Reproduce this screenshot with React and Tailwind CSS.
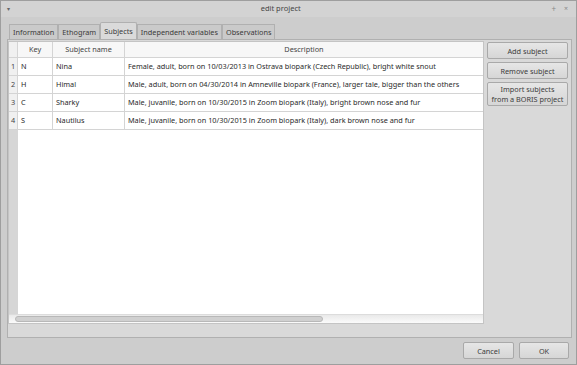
import React from 'react';

const rows = [
  ['1', 'N', 'Nina', 'Female, adult, born on 10/03/2013 in Ostrava biopark (Czech Republic), bright white snout'],
  ['2', 'H', 'Himal', 'Male, adult, born on 04/30/2014 in Amneville biopark (France), larger tale, bigger than the others'],
  ['3', 'C', 'Sharky', 'Male, juvanile, born on 10/30/2015 in Zoom biopark (Italy), bright brown nose and fur'],
  ['4', 'S', 'Nautilus', 'Male, juvanile, born on 10/30/2015 in Zoom biopark (Italy), dark brown nose and fur'],
];

const tabs = ['Information', 'Ethogram', 'Subjects', 'Independent variables', 'Observations'];

function Btn({ children, className = '' }) {
  return (
    <button className={`border border-[#a9a9a9] rounded-[2px] bg-gradient-to-b from-[#e6e6e6] to-[#d6d6d6] text-[#3c3c3c] leading-[10px] ${className}`}>
      {children}
    </button>
  );
}

export default function App() {
  return (
    <div className="w-[577px] h-[365px] bg-[#cdcdcd] border border-[#9e9e9e] flex flex-col text-[7.3px] text-[#2e2e2e] overflow-hidden" style={{ fontFamily: '"Noto Sans", "Open Sans", sans-serif' }}>
      {/* title bar */}
      <div className="h-[16px] flex items-center px-[6px] relative bg-[#d3d3d3]">
        <span className="text-[6px] text-[#666]">▾</span>
        <div className="flex-1 text-center text-[7.5px] text-[#444]">edit project</div>
        <span className="text-[#888] text-[8px] mr-[8px]">+</span>
        <span className="text-[#888] text-[7px] mr-[2px]">×</span>
      </div>

      {/* tabs */}
      <div className="flex items-end pl-[8px] mt-[5px] h-[17px]">
        {tabs.map((t) => (
          <div
            key={t}
            className={
              t === 'Subjects'
                ? 'h-[17px] px-[3px] flex items-center bg-[#dadada] border border-b-0 border-[#b0b0b0] text-[#3a3a3a] rounded-t-[2px]'
                : 'h-[15px] px-[3px] flex items-center bg-[#cacaca] border border-b-0 border-[#b0b0b0] text-[#3a3a3a]'
            }
          >
            {t}
          </div>
        ))}
      </div>

      {/* pane */}
      <div className="ml-[6px] mr-[4px] h-[299px] bg-[#d9d9d9] border border-[#b0b0b0] flex pt-[1px] pr-[3px]">
        {/* table */}
        <div className="w-[476px] shrink-0 h-[283px] bg-white border border-[#c4c4c4] flex flex-col">
          <div className="flex-1 flex">
            <div className="w-[9px] bg-[#d6d6d6] flex flex-col">
              <div className="h-[16px] bg-[#f0f0f0] border-b border-r border-[#d4d4d4]" />
              {rows.map((r) => (
                <div key={r[0]} className="h-[18px] bg-[#f0f0f0] border-b border-r border-[#d4d4d4] flex items-center justify-center text-[#444]">
                  {r[0]}
                </div>
              ))}
            </div>
            <div className="flex-1 flex flex-col">
              <div className="h-[16px] flex bg-[#f7f7f7] border-b border-[#d4d4d4] text-[#444]">
                <div className="w-[35px] border-r border-[#d4d4d4] flex items-center justify-center">Key</div>
                <div className="w-[72px] border-r border-[#d4d4d4] flex items-center justify-center">Subject name</div>
                <div className="flex-1 flex items-center justify-center">Description</div>
              </div>
              {rows.map((r) => (
                <div key={r[0]} className="h-[18px] flex border-b border-[#d4d4d4] text-[#2a2a2a]">
                  <div className="w-[35px] border-r border-[#d4d4d4] flex items-center pl-[3px]">{r[1]}</div>
                  <div className="w-[72px] border-r border-[#d4d4d4] flex items-center pl-[3px]">{r[2]}</div>
                  <div className="flex-1 flex items-center pl-[3px] whitespace-nowrap overflow-hidden">{r[3]}</div>
                </div>
              ))}
            </div>
          </div>
          {/* horizontal scrollbar */}
          <div className="h-[9px] bg-gradient-to-b from-[#e9e9e9] to-[#fbfbfb] border-t border-[#dcdcdc] flex items-center pl-[6px]">
            <div className="w-[308px] h-[6px] rounded-[3px] bg-[#d0d0d0] border border-[#b8b8b8]" />
          </div>
        </div>

        {/* side buttons */}
        <div className="flex flex-col gap-[3px] ml-[3px] mt-[1px] w-[81px] shrink-0">
          <Btn className="h-[17px]">Add subject</Btn>
          <Btn className="h-[17px]">Remove subject</Btn>
          <Btn className="h-[24px]">Import subjects<br />from a BORIS project</Btn>
        </div>
      </div>

      {/* bottom buttons */}
      <div className="flex justify-end gap-[5px] mt-[4px] pr-[7px]">
        <Btn className="w-[51px] h-[17px]">Cancel</Btn>
        <Btn className="w-[50px] h-[17px]">OK</Btn>
      </div>
    </div>
  );
}
